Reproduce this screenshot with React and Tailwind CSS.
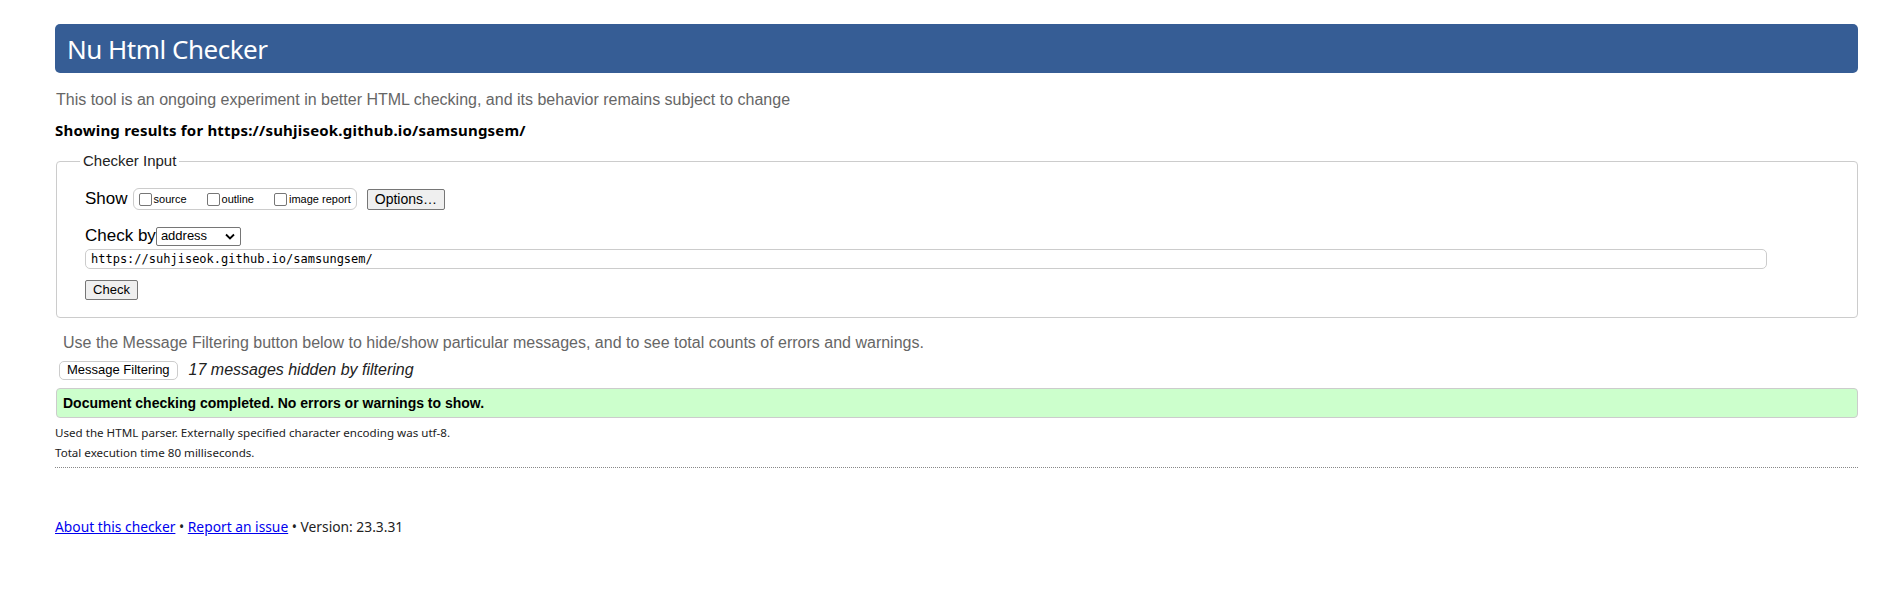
import React from "react";

function Checkbox({ label, last }) {
  return (
    <label className={"flex items-center " + (last ? "" : "mr-[20px]")}>
      <span className="w-[13px] h-[13px] border border-[#767676] rounded-[2px] bg-white mr-[2px]"></span>
      <span className="text-[11px] leading-[13px] text-black">{label}</span>
    </label>
  );
}

export default function App() {
  return (
    <div className="min-h-[593px] bg-white pl-[55px] pr-[32px] pt-[24px] font-['Liberation_Sans',Arial,sans-serif] text-black">
      <div className="h-[49px] bg-[#365d95] rounded-[5px] flex items-center pl-[12px]">
        <h1 className="text-white text-[26px] leading-none font-['Noto_Sans',sans-serif] font-normal tracking-[-0.5px]">
          Nu Html Checker
        </h1>
      </div>
      <p className="mt-[18px] text-[16px] leading-[18px] text-[#666666] pl-[1px]">
        This tool is an ongoing experiment in better HTML checking, and its behavior remains subject to change
      </p>
      <p className="mt-[11px] text-[15px] leading-[20px] font-bold font-['Noto_Sans',sans-serif] tracking-[0.2px] text-black">
        Showing results for https://suhjiseok.github.io/samsungsem/
      </p>
      <fieldset className="mt-[12px] ml-[1px] border border-[#cccccc] rounded-[4px] pl-[28px] pr-[28px] pb-[17px]">
        <legend className="ml-[-5px] px-[3px] text-[15px] leading-[18px] text-[#222]">Checker Input</legend>
        <div className="mt-[18px] flex items-center h-[22px]">
          <span className="text-[17px] leading-[20px] mr-[5px]">Show</span>
          <div className="h-[22px] flex items-center border border-[#cccccc] rounded-[6px] px-[5px] mr-[10px]">
            <Checkbox label="source" />
            <Checkbox label="outline" />
            <Checkbox label="image report" last />
          </div>
          <div className="h-[21px] flex items-center px-[7px] border border-[#767676] rounded-[2px] bg-[#efefef] text-[14px]">
            Options…
          </div>
        </div>
        <div className="mt-[16px] flex items-center h-[20px]">
          <span className="text-[17px] leading-[20px]">Check by</span>
          <div className="h-[19px] w-[85px] flex items-center justify-between border border-[#767676] rounded-[2px] pl-[4px] pr-[5px] text-[13px]">
            <span>address</span>
            <svg width="10" height="7" viewBox="0 0 10 7">
              <path d="M1 1.5 L5 5.5 L9 1.5" fill="none" stroke="#000" strokeWidth="1.8" />
            </svg>
          </div>
        </div>
        <div className="mt-[3px] h-[20px] w-[1682px] flex items-center border border-[#cccccc] rounded-[5px] pl-[5px] font-['DejaVu_Sans_Mono',monospace] text-[12px]">
          https://suhjiseok.github.io/samsungsem/
        </div>
        <div className="mt-[11px] h-[20px] w-[53px] flex items-center justify-center border border-[#767676] rounded-[2px] bg-[#efefef] text-[13px]">
          Check
        </div>
      </fieldset>
      <p className="mt-[16px] pl-[8px] text-[16px] leading-[18px] text-[#666666]">
        Use the Message Filtering button below to hide/show particular messages, and to see total counts of errors and warnings.
      </p>
      <div className="mt-[8px] flex items-center h-[20px]">
        <div className="ml-[4px] h-[19px] px-[7px] flex items-center border border-[#cccccc] rounded-[5px] bg-white text-[13px]">
          Message Filtering
        </div>
        <span className="ml-[11px] italic text-[16px] leading-[18px] text-[#222]">17 messages hidden by filtering</span>
      </div>
      <div className="mt-[8px] ml-[1px] h-[30px] flex items-center pl-[6px] bg-[#ccffcc] border border-[#cccccc] rounded-[4px] text-[14px] font-bold">
        Document checking completed. No errors or warnings to show.
      </div>
      <div className="mt-[5px] font-['Noto_Sans',sans-serif] text-[11.6px] leading-[20px] text-[#222]">
        <p>Used the HTML parser. Externally specified character encoding was utf-8.</p>
        <p>Total execution time 80 milliseconds.</p>
      </div>
      <div className="mt-[4px] border-t border-dotted border-[#888888]"></div>
      <p className="mt-[49px] font-['Noto_Sans',sans-serif] text-[13.8px] leading-[20px] text-[#222]">
        <a className="text-[#0000ee] underline" href="#">About this checker</a>
        {" • "}
        <a className="text-[#0000ee] underline" href="#">Report an issue</a>
        {" • Version: 23.3.31"}
      </p>
    </div>
  );
}
